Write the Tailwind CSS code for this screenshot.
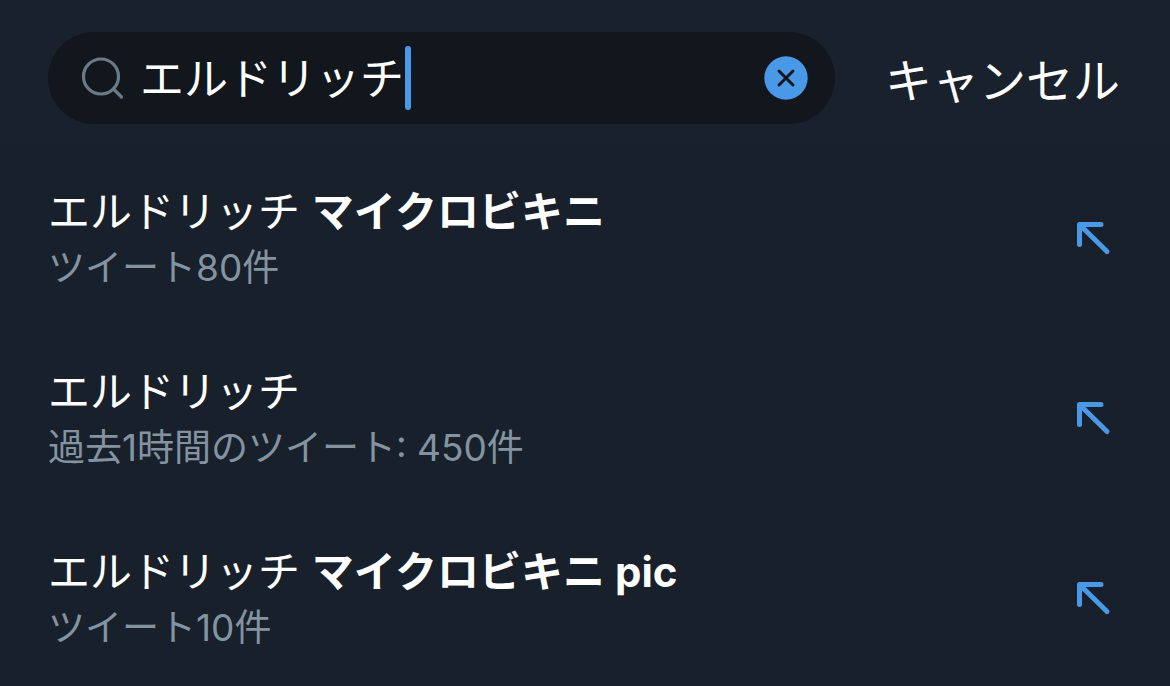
<!DOCTYPE html>
<html lang="ja">
<head>
  <meta charset="UTF-8" />
  <meta name="viewport" content="width=device-width, initial-scale=1.0" />
  <title>検索</title>
  <script src="https://cdn.jsdelivr.net/npm/@tailwindcss/browser@4"></script>
</head>
<body class="min-h-screen overflow-x-hidden bg-[#18202b] font-['Inter','Noto_Sans_CJK_JP',sans-serif] text-white">
  <header class="flex h-37 items-center bg-[#19212c] pt-2 pr-[50px] pl-12">
    <form class="flex h-23 flex-1 items-center rounded-full bg-[#12171d] pr-[27px] pl-8">
      <label for="search" class="shrink-0" aria-label="検索">
        <svg class="size-11" viewBox="0 0 44 44" fill="none" stroke="#6c7a87" stroke-width="3.2" stroke-linecap="round">
          <circle cx="21" cy="20.500" r="17.500" />
          <path d="M33.500 33 41.500 41" />
        </svg>
      </label>
      <input id="search" type="text" value="エルドリッチ" autocomplete="off" class="ml-4 field-sizing-content h-16 min-w-0 bg-transparent pt-0.5 text-[44px] font-normal caret-transparent outline-none" />
      <span class="ml-px h-16 w-1.5 shrink-0 rounded-full bg-[#4a99e9]"></span>
      <button type="reset" aria-label="クリア" class="ml-auto shrink-0">
        <svg class="size-11" viewBox="0 0 44 44" fill="none">
          <circle cx="22" cy="22" r="21.7" fill="#4a99e9" />
          <path d="M15 15 29 29M29 15 15 29" stroke="#12171d" stroke-width="3" stroke-linecap="round" />
        </svg>
      </button>
    </form>
    <button type="button" class="ml-[50px] shrink-0 pt-1.5 text-[47px] leading-16">キャンセル</button>
  </header>

  <main>
    <ul>
      <li class="flex h-45 items-center justify-between pr-14 pl-12">
        <a href="#" class="block pt-1">
          <p class="text-[42px] leading-14">エルドリッチ <b class="font-bold">マイクロビキニ</b></p>
          <p class="text-[37px] leading-14 text-[#8493a0]">ツイート80件</p>
        </a>
        <button type="button" aria-label="検索欄に入力">
          <svg class="size-10" viewBox="0 0 40 40" fill="none" stroke="#4a99e9" stroke-width="5" stroke-linecap="round" stroke-linejoin="round">
            <path d="M5.5 26.500V6.500H27M7 8 33 33.500" />
          </svg>
        </button>
      </li>
      <li class="flex h-45 items-center justify-between pr-14 pl-12">
        <a href="#" class="block pt-1">
          <p class="text-[42px] leading-14">エルドリッチ</p>
          <p class="text-[37px] leading-14 text-[#8493a0]">過去1時間のツイート: 450件</p>
        </a>
        <button type="button" aria-label="検索欄に入力">
          <svg class="size-10" viewBox="0 0 40 40" fill="none" stroke="#4a99e9" stroke-width="5" stroke-linecap="round" stroke-linejoin="round">
            <path d="M5.5 26.500V6.500H27M7 8 33 33.500" />
          </svg>
        </button>
      </li>
      <li class="flex h-45 items-center justify-between pr-14 pl-12">
        <a href="#" class="block pt-1">
          <p class="text-[42px] leading-14">エルドリッチ <b class="font-bold">マイクロビキニ pic</b></p>
          <p class="text-[37px] leading-14 text-[#8493a0]">ツイート10件</p>
        </a>
        <button type="button" aria-label="検索欄に入力">
          <svg class="size-10" viewBox="0 0 40 40" fill="none" stroke="#4a99e9" stroke-width="5" stroke-linecap="round" stroke-linejoin="round">
            <path d="M5.5 26.500V6.500H27M7 8 33 33.500" />
          </svg>
        </button>
      </li>
    </ul>
  </main>
</body>
</html>
